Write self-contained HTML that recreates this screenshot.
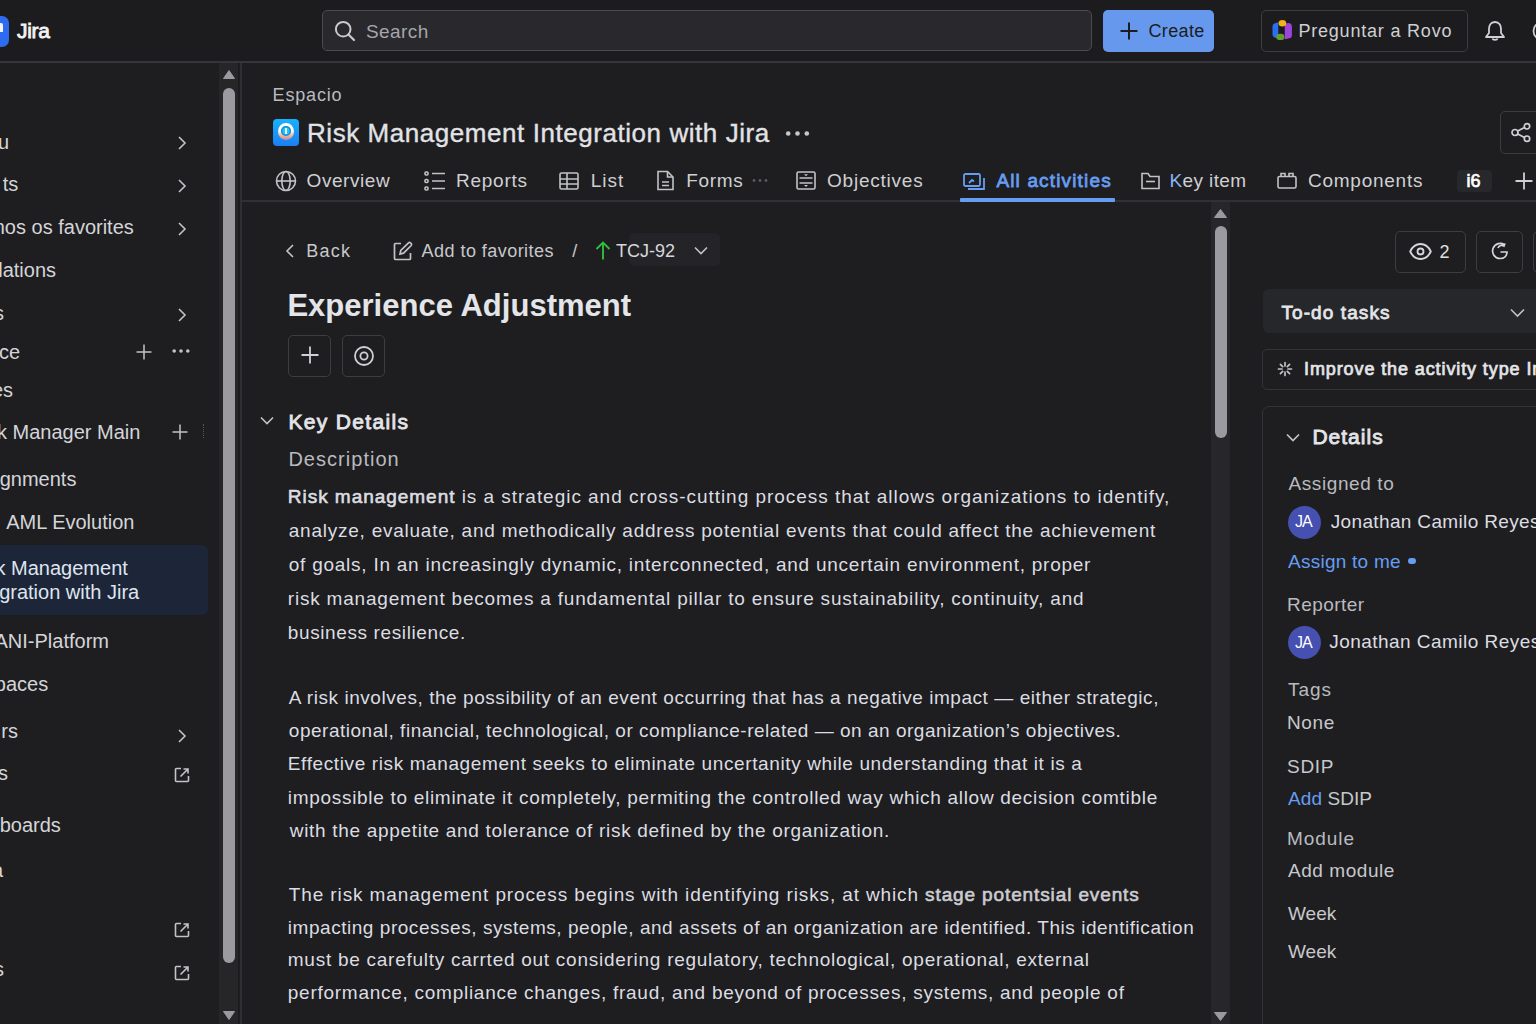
<!DOCTYPE html>
<html><head><meta charset="utf-8"><title>Jira</title>
<style>
html,body{margin:0;padding:0;}
body{width:1536px;height:1024px;overflow:hidden;position:relative;background:#1e1e21;font-family:"Liberation Sans",sans-serif;}
.t{position:absolute;white-space:nowrap;line-height:1;}
.b{position:absolute;box-sizing:border-box;}
b{font-weight:400;-webkit-text-stroke:0.6px currentColor;}
svg{position:absolute;overflow:visible;}
</style></head><body>
<!-- header bg -->
<div class="b" style="left:0;top:0;width:1536px;height:61px;background:#1c1c1f"></div>
<!-- header line -->
<div class="b" style="left:0;top:61px;width:1536px;height:2px;background:#36363a"></div>
<!-- jira logo -->
<div class="b" style="left:-14px;top:16px;width:23px;height:31px;background:#2f6bf0;border-radius:7px"></div>
<div class="b" style="left:-2px;top:23px;width:5px;height:9px;background:#f4f4f4;border-radius:0 2px 0 0"></div>
<!-- search -->
<div class="b" style="left:322px;top:10px;width:770px;height:41px;background:#28282d;border:1.5px solid #4a4a4f;border-radius:5px"></div>
<svg style="left:334px;top:20px" width="22" height="22" viewBox="0 0 22 22"><circle cx="9.2" cy="9.2" r="7.3" fill="none" stroke="#c9cacd" stroke-width="2"/><path d="M14.5 14.5 L20 20" stroke="#c9cacd" stroke-width="2.2" stroke-linecap="round"/></svg>
<!-- create -->
<div class="b" style="left:1103px;top:10px;width:111px;height:42px;background:#6699ee;border-radius:5px"></div>
<svg style="left:1120px;top:22px" width="18" height="18" viewBox="0 0 18 18"><path d="M9 0.5V17.5M0.5 9H17.5" stroke="#1b1d22" stroke-width="2"/></svg>
<!-- rovo -->
<div class="b" style="left:1261px;top:10px;width:207px;height:42px;border:1.5px solid #3c3d41;border-radius:5px"></div>
<svg style="left:1266px;top:14px" width="32" height="32" viewBox="0 0 32 32">
<path d="M12.3 8.3 L8.4 9.6 Q6.5 10.3 6.5 12.4 V20.8 Q6.5 22.7 8.4 23.4 L12.3 24.6 Z" fill="#2c6fec"/>
<path d="M18.8 9.5 L23.4 8.9 Q25.9 9.6 25.9 12.3 V21.4 Q25.9 23.8 23.6 24.3 L18.8 25.2 Z" fill="#9d44dd"/>
<ellipse cx="16.4" cy="9.3" rx="3.8" ry="3.3" fill="#f1b21a"/>
<ellipse cx="14.4" cy="22.9" rx="4.1" ry="3.2" fill="#62a02a"/>
</svg>
<!-- bell -->
<svg style="left:1484px;top:20px" width="22" height="22" viewBox="0 0 22 22"><path d="M11 2 C6.5 2 5 5.5 5 9 V13 L2 17 H20 L17 13 V9 C17 5.5 15.5 2 11 2 Z" fill="none" stroke="#cfd0d3" stroke-width="1.8" stroke-linejoin="round"/><path d="M8.5 18.5 C8.8 20.3 13.2 20.3 13.5 18.5" fill="none" stroke="#cfd0d3" stroke-width="1.8"/></svg>
<svg style="left:1531px;top:20px" width="22" height="22" viewBox="0 0 22 22"><circle cx="11" cy="11" r="8.5" fill="none" stroke="#cfd0d3" stroke-width="1.8"/></svg>

<!-- sidebar scrollbar -->
<div class="b" style="left:219px;top:63px;width:19px;height:961px;background:#262629"></div>
<div class="b" style="left:238px;top:63px;width:1px;height:961px;background:#1b1b1d"></div>
<div class="b" style="left:240px;top:63px;width:1.5px;height:961px;background:#2e2f33"></div>
<svg style="left:223px;top:70px" width="12" height="9" viewBox="0 0 12 9"><path d="M6 0.5 L11.5 8.5 H0.5 Z" fill="#9a9aa0" stroke="#9a9aa0" stroke-linejoin="round"/></svg>
<div class="b" style="left:223px;top:88px;width:12px;height:875px;background:#9a9aa0;border-radius:6px"></div>
<svg style="left:223px;top:1011px" width="12" height="9" viewBox="0 0 12 9"><path d="M6 8.5 L11.5 0.5 H0.5 Z" fill="#9a9aa0" stroke="#9a9aa0" stroke-linejoin="round"/></svg>

<!-- sidebar selected -->
<div class="b" style="left:-8px;top:544.5px;width:216px;height:70px;background:#1d2639;border-radius:6px"></div>

<!-- sidebar chevrons -->
<svg style="left:177px;top:136px" width="10" height="14" viewBox="0 0 10 14"><path d="M2 1 L8 7 L2 13" fill="none" stroke="#c2c3c6" stroke-width="1.6"/></svg>
<svg style="left:177px;top:178.5px" width="10" height="14" viewBox="0 0 10 14"><path d="M2 1 L8 7 L2 13" fill="none" stroke="#c2c3c6" stroke-width="1.6"/></svg>
<svg style="left:177px;top:221.5px" width="10" height="14" viewBox="0 0 10 14"><path d="M2 1 L8 7 L2 13" fill="none" stroke="#c2c3c6" stroke-width="1.6"/></svg>
<svg style="left:177px;top:308px" width="10" height="14" viewBox="0 0 10 14"><path d="M2 1 L8 7 L2 13" fill="none" stroke="#c2c3c6" stroke-width="1.6"/></svg>
<svg style="left:177px;top:729px" width="10" height="14" viewBox="0 0 10 14"><path d="M2 1 L8 7 L2 13" fill="none" stroke="#c2c3c6" stroke-width="1.6"/></svg>
<!-- plus / dots -->
<svg style="left:136px;top:344px" width="16" height="16" viewBox="0 0 16 16"><path d="M8 0.5V15.5M0.5 8H15.5" stroke="#c2c3c6" stroke-width="1.5"/></svg>
<svg style="left:172px;top:348px" width="18" height="6" viewBox="0 0 18 6"><circle cx="2.2" cy="3" r="1.8" fill="#c2c3c6"/><circle cx="9" cy="3" r="1.8" fill="#c2c3c6"/><circle cx="15.8" cy="3" r="1.8" fill="#c2c3c6"/></svg>
<svg style="left:172px;top:423.5px" width="16" height="16" viewBox="0 0 16 16"><path d="M8 0.5V15.5M0.5 8H15.5" stroke="#c2c3c6" stroke-width="1.5"/></svg>
<div class="b" style="left:203px;top:424px;width:1px;height:14px;border-left:1px dotted #55565a"></div>
<!-- ext link icons -->
<svg style="left:174px;top:767px" width="16" height="16" viewBox="0 0 16 16"><path d="M7 1.5 H2.5 Q1.5 1.5 1.5 2.5 V13.5 Q1.5 14.5 2.5 14.5 H13.5 Q14.5 14.5 14.5 13.5 V9" fill="none" stroke="#c2c3c6" stroke-width="1.6"/><path d="M6.5 9.5 L13.5 2.5 M9.5 2 H14 V6.5" fill="none" stroke="#c2c3c6" stroke-width="1.6"/></svg>
<svg style="left:174px;top:921.5px" width="16" height="16" viewBox="0 0 16 16"><path d="M7 1.5 H2.5 Q1.5 1.5 1.5 2.5 V13.5 Q1.5 14.5 2.5 14.5 H13.5 Q14.5 14.5 14.5 13.5 V9" fill="none" stroke="#c2c3c6" stroke-width="1.6"/><path d="M6.5 9.5 L13.5 2.5 M9.5 2 H14 V6.5" fill="none" stroke="#c2c3c6" stroke-width="1.6"/></svg>
<svg style="left:174px;top:964.5px" width="16" height="16" viewBox="0 0 16 16"><path d="M7 1.5 H2.5 Q1.5 1.5 1.5 2.5 V13.5 Q1.5 14.5 2.5 14.5 H13.5 Q14.5 14.5 14.5 13.5 V9" fill="none" stroke="#c2c3c6" stroke-width="1.6"/><path d="M6.5 9.5 L13.5 2.5 M9.5 2 H14 V6.5" fill="none" stroke="#c2c3c6" stroke-width="1.6"/></svg>

<!-- space icon -->
<div class="b" style="left:273px;top:119.3px;width:26px;height:26.5px;border-radius:4px;background:linear-gradient(180deg,#19b0ff,#1a80f2)"></div>
<div class="b" style="left:278px;top:123px;width:15.7px;height:16.8px;border-radius:50%;background:linear-gradient(180deg,#ffffff 45%,#f0a888 80%,#b48ad0)"></div>
<div class="b" style="left:281px;top:126px;width:10px;height:10px;border-radius:50%;background:#22c4f0;box-shadow:inset 0 0 0 1.5px #1590e0"></div>
<div class="b" style="left:285.3px;top:128px;width:1.6px;height:6px;background:#e8fbff"></div>
<!-- title dots -->
<svg style="left:785px;top:129.5px" width="25" height="7" viewBox="0 0 25 7"><circle cx="3.2" cy="3.5" r="2.3" fill="#c7c8cb"/><circle cx="12.5" cy="3.5" r="2.3" fill="#c7c8cb"/><circle cx="21.8" cy="3.5" r="2.3" fill="#c7c8cb"/></svg>
<!-- share btn -->
<div class="b" style="left:1500px;top:111px;width:60px;height:43px;border:1.5px solid #3c3d41;border-radius:5px"></div>
<svg style="left:1511px;top:123px" width="20" height="19" viewBox="0 0 20 19"><circle cx="4" cy="9.5" r="3" fill="none" stroke="#cfd0d3" stroke-width="1.7"/><circle cx="16" cy="3.3" r="2.7" fill="none" stroke="#cfd0d3" stroke-width="1.7"/><circle cx="16" cy="15.7" r="2.7" fill="none" stroke="#cfd0d3" stroke-width="1.7"/><path d="M6.7 8 L13.5 4.5 M6.7 11 L13.5 14.5" stroke="#cfd0d3" stroke-width="1.7"/></svg>

<!-- tabs line -->
<div class="b" style="left:241px;top:200px;width:1295px;height:2px;background:#303135"></div>
<div class="b" style="left:960px;top:198px;width:155px;height:3.5px;background:#669df1;border-radius:1px"></div>
<!-- tab icons -->
<svg style="left:274.5px;top:169.5px" width="22" height="22" viewBox="0 0 22 22"><g fill="none" stroke="#c2c3c6" stroke-width="1.6"><circle cx="11" cy="11" r="9.5"/><ellipse cx="11" cy="11" rx="4.2" ry="9.5"/><path d="M1.5 11H20.5"/></g></svg>
<svg style="left:424px;top:171px" width="22" height="20" viewBox="0 0 22 20"><g fill="none" stroke="#c2c3c6" stroke-width="1.6"><path d="M8 2.5H21M8 10H21M8 17.5H21"/><rect x="1" y="1" width="3" height="3" rx="1"/><rect x="1" y="8.5" width="3" height="3" rx="1"/><rect x="1" y="16" width="3" height="3" rx="1"/></g></svg>
<svg style="left:559px;top:171.5px" width="20" height="18" viewBox="0 0 20 18"><g fill="none" stroke="#c2c3c6" stroke-width="1.6"><rect x="1" y="1" width="18" height="16" rx="1.5"/><path d="M1 7H19M1 12H19M8 1V17"/></g></svg>
<svg style="left:657px;top:170px" width="17" height="21" viewBox="0 0 17 21"><g fill="none" stroke="#c2c3c6" stroke-width="1.6"><path d="M1 1.5H10.5L16 7V19.5H1Z"/><path d="M10.5 1.5V7H16"/><path d="M5 12H12M5 15.5H12"/></g></svg>
<svg style="left:752px;top:178px" width="16" height="5" viewBox="0 0 16 5"><circle cx="2" cy="2.5" r="1.4" fill="#5a5b5f"/><circle cx="8" cy="2.5" r="1.4" fill="#5a5b5f"/><circle cx="14" cy="2.5" r="1.4" fill="#5a5b5f"/></svg>
<svg style="left:796px;top:171px" width="20" height="19" viewBox="0 0 20 19"><g fill="none" stroke="#c2c3c6" stroke-width="1.6"><rect x="1" y="1" width="18" height="17" rx="1.5"/><path d="M3.5 7H16.5M3.5 12H16.5"/></g><path d="M8 3.2H12L10 5.3Z M8 14H12L10 16Z" fill="#c2c3c6"/></svg>
<svg style="left:963px;top:172.5px" width="22" height="17" viewBox="0 0 22 17"><g fill="none" stroke="#669df1" stroke-width="1.8"><rect x="1" y="1" width="16" height="12" rx="1.5"/><path d="M5 16H21V5"/><path d="M6 10 L9 7 L11 8.5"/></g></svg>
<svg style="left:1141px;top:171.5px" width="19" height="18" viewBox="0 0 19 18"><g fill="none" stroke="#c2c3c6" stroke-width="1.6"><path d="M1 4.5 V16.5 H18 V4.5 H9 L7 1.5 H1 Z"/><path d="M5 9.5H14"/></g></svg>
<svg style="left:1277px;top:172px" width="20" height="17" viewBox="0 0 20 17"><g fill="none" stroke="#c2c3c6" stroke-width="1.6"><rect x="1" y="4.5" width="18" height="11.5" rx="1.5"/><path d="M4 4.5V1.5H8V4.5M12 4.5V1.5H16V4.5"/></g></svg>
<div class="b" style="left:1457px;top:170px;width:35px;height:22px;background:#27282c;border-radius:4px"></div>
<svg style="left:1515px;top:171.5px" width="18" height="18" viewBox="0 0 18 18"><path d="M9 0.5V17.5M0.5 9H17.5" stroke="#cfd0d3" stroke-width="1.8"/></svg>

<!-- content scrollbar -->
<div class="b" style="left:1211px;top:202px;width:19px;height:822px;background:#27272b"></div>
<svg style="left:1214px;top:208.5px" width="13" height="9" viewBox="0 0 13 9"><path d="M6.5 0.5 L12.5 8.5 H0.5 Z" fill="#9a9aa0" stroke="#9a9aa0" stroke-linejoin="round"/></svg>
<div class="b" style="left:1214.5px;top:226px;width:12.5px;height:211.5px;background:#9a9aa0;border-radius:6px"></div>
<svg style="left:1214px;top:1012px" width="13" height="9" viewBox="0 0 13 9"><path d="M6.5 8.5 L12.5 0.5 H0.5 Z" fill="#9a9aa0" stroke="#9a9aa0" stroke-linejoin="round"/></svg>

<!-- breadcrumb -->
<svg style="left:285px;top:244px" width="10" height="14" viewBox="0 0 10 14"><path d="M8 1 L2 7 L8 13" fill="none" stroke="#c2c3c6" stroke-width="1.6"/></svg>
<svg style="left:392.5px;top:241px" width="20" height="20" viewBox="0 0 20 20"><g fill="none" stroke="#c2c3c6" stroke-width="1.7"><path d="M8 2.5H2.5Q1.5 2.5 1.5 3.5V17.5Q1.5 18.5 2.5 18.5H16.5Q17.5 18.5 17.5 17.5V12"/><path d="M7 13 L7.8 9.5 L15.5 1.8 Q16.5 1 17.5 1.8 L18.2 2.5 Q19 3.5 18.2 4.5 L10.5 12.2 Z"/></g></svg>
<div class="b" style="left:628.5px;top:233px;width:91.5px;height:33px;background:#242428;border-radius:5px"></div>
<svg style="left:595px;top:241px" width="16" height="19" viewBox="0 0 16 19"><path d="M8 18.5V1.5M1.5 8L8 1.5L14.5 8" fill="none" stroke="#2fbf3f" stroke-width="1.9"/></svg>
<svg style="left:694px;top:246px" width="14" height="9" viewBox="0 0 14 9"><path d="M1 1.5 L7 7.5 L13 1.5" fill="none" stroke="#c2c3c6" stroke-width="1.6"/></svg>

<!-- action buttons -->
<div class="b" style="left:288px;top:334.5px;width:43px;height:42px;border:1.5px solid #3c3d41;border-radius:5px"></div>
<svg style="left:301px;top:346px" width="18" height="18" viewBox="0 0 18 18"><path d="M9 0.5V17.5M0.5 9H17.5" stroke="#cfd0d3" stroke-width="1.8"/></svg>
<div class="b" style="left:341.5px;top:334.5px;width:43.5px;height:42px;border:1.5px solid #3c3d41;border-radius:5px"></div>
<svg style="left:353.5px;top:345.5px" width="20" height="20" viewBox="0 0 20 20"><circle cx="10" cy="10" r="9" fill="none" stroke="#cfd0d3" stroke-width="1.8"/><circle cx="10" cy="10" r="3.6" fill="none" stroke="#cfd0d3" stroke-width="1.8"/></svg>
<!-- key details chevron -->
<svg style="left:259.5px;top:416px" width="14" height="9" viewBox="0 0 14 9"><path d="M1 1.5 L7 7.5 L13 1.5" fill="none" stroke="#c2c3c6" stroke-width="1.6"/></svg>

<!-- right panel -->
<div class="b" style="left:1395px;top:230.5px;width:71px;height:42px;border:1.5px solid #3c3d41;border-radius:5px"></div>
<svg style="left:1409px;top:242.5px" width="23" height="17" viewBox="0 0 23 17"><path d="M1.2 8.5 C4 2.5 8 1 11.5 1 C15 1 19 2.5 21.8 8.5 C19 14.5 15 16 11.5 16 C8 16 4 14.5 1.2 8.5 Z" fill="none" stroke="#d6d7da" stroke-width="1.8"/><circle cx="11.5" cy="8.5" r="3" fill="none" stroke="#d6d7da" stroke-width="1.8"/></svg>
<div class="b" style="left:1475.5px;top:230.5px;width:47.5px;height:42px;border:1.5px solid #3c3d41;border-radius:5px"></div>
<svg style="left:1490.5px;top:242px" width="18" height="18" viewBox="0 0 18 18"><path d="M13 2.5 C10.5 0.5 4 1 2 6.5 C0.5 11 3.5 16.5 9 16.5 C13.5 16.5 16 13.5 16 10 H9.5 M7 6 C8 3.5 11 2.5 13 4 L14 1.5" fill="none" stroke="#d6d7da" stroke-width="1.7"/></svg>
<div class="b" style="left:1533px;top:230.5px;width:40px;height:42px;border:1.5px solid #3c3d41;border-radius:5px"></div>

<div class="b" style="left:1263px;top:288.5px;width:290px;height:44.5px;background:#26272b;border-radius:6px"></div>
<svg style="left:1510px;top:307.5px" width="15" height="10" viewBox="0 0 15 10"><path d="M1 1.5 L7.5 8 L14 1.5" fill="none" stroke="#c2c3c6" stroke-width="1.6"/></svg>

<div class="b" style="left:1262px;top:348.5px;width:300px;height:41px;border:1.5px solid #333438;border-radius:5px"></div>
<svg style="left:1277px;top:361px" width="16" height="16" viewBox="0 0 16 16"><g stroke="#c2c3c6" stroke-width="1.7" stroke-linecap="round"><path d="M8 1.5V5M8 11V14.5M1.5 8H5M11 8H14.5M3.4 3.4L5.7 5.7M10.3 10.3L12.6 12.6M12.6 3.4L10.3 5.7M5.7 10.3L3.4 12.6"/></g></svg>

<div class="b" style="left:1262px;top:406px;width:300px;height:700px;border:1.5px solid #333438;border-radius:7px"></div>
<svg style="left:1286px;top:433px" width="14" height="9" viewBox="0 0 14 9"><path d="M1 1.5 L7 7.5 L13 1.5" fill="none" stroke="#c2c3c6" stroke-width="1.7"/></svg>
<div class="b" style="left:1287.5px;top:506px;width:33px;height:33px;border-radius:50%;background:#4550b0"></div>
<div class="b" style="left:1287.5px;top:626px;width:33px;height:33px;border-radius:50%;background:#4550b0"></div>
<div class="b" style="left:1408px;top:558px;width:7.5px;height:6px;border-radius:3px;background:#669df1"></div>

<div class="t" id="jira" style="left:17.00px;top:20.22px;font-size:21px;color:#f2f2f2;-webkit-text-stroke:0.84px currentColor;letter-spacing:-0.334px;">Jira</div>
<div class="t" id="search" style="left:366.00px;top:21.62px;font-size:19px;color:#a4a6aa;letter-spacing:0.400px;">Search</div>
<div class="t" id="create" style="left:1148.40px;top:21.96px;font-size:18px;color:#1b1d22;letter-spacing:0.380px;">Create</div>
<div class="t" id="rovo" style="left:1298.40px;top:21.96px;font-size:18px;color:#cfd0d3;letter-spacing:0.800px;">Preguntar a Rovo</div>
<div class="t" id="s1" style="right:1527.00px;top:131.77px;font-size:20px;color:#d4d5d8;">u</div>
<div class="t" id="s2" style="right:1517.80px;top:174.07px;font-size:20px;color:#d4d5d8;">ts</div>
<div class="t" id="s3" style="right:1402.20px;top:216.67px;font-size:20px;color:#d4d5d8;">nos os favorites</div>
<div class="t" id="s4" style="right:1480.00px;top:259.67px;font-size:20px;color:#d4d5d8;">lations</div>
<div class="t" id="s5" style="right:1532.00px;top:303.37px;font-size:20px;color:#d4d5d8;">s</div>
<div class="t" id="s6" style="right:1516.00px;top:341.97px;font-size:20px;color:#d4d5d8;">ce</div>
<div class="t" id="s7" style="right:1523.00px;top:380.27px;font-size:20px;color:#d4d5d8;">es</div>
<div class="t" id="s8" style="right:1395.60px;top:421.67px;font-size:20px;color:#d4d5d8;">k Manager Main</div>
<div class="t" id="s9" style="right:1459.60px;top:469.47px;font-size:20px;color:#d4d5d8;">gnments</div>
<div class="t" id="s10" style="right:1401.60px;top:512.17px;font-size:20px;color:#d4d5d8;">AML Evolution</div>
<div class="t" id="s13" style="right:1427.00px;top:630.57px;font-size:20px;color:#d4d5d8;">ANI-Platform</div>
<div class="t" id="s14" style="right:1487.80px;top:673.57px;font-size:20px;color:#d4d5d8;">paces</div>
<div class="t" id="s15" style="right:1518.00px;top:721.07px;font-size:20px;color:#d4d5d8;">rs</div>
<div class="t" id="s16" style="right:1528.00px;top:762.57px;font-size:20px;color:#d4d5d8;">s</div>
<div class="t" id="s17" style="right:1475.20px;top:815.37px;font-size:20px;color:#d4d5d8;">boards</div>
<div class="t" id="s18" style="right:1533.00px;top:860.07px;font-size:20px;color:#d4d5d8;">a</div>
<div class="t" id="s19" style="right:1532.00px;top:959.37px;font-size:20px;color:#d4d5d8;">s</div>
<div class="t" id="s11" style="right:1408.20px;top:558.07px;font-size:20px;color:#dfe5f0;">k Management</div>
<div class="t" id="s12" style="right:1396.80px;top:582.37px;font-size:20px;color:#dfe5f0;">gration with Jira</div>
<div class="t" id="espacio" style="left:272.60px;top:85.76px;font-size:18px;color:#b9bbbf;letter-spacing:0.817px;">Espacio</div>
<div class="t" id="title" style="left:307.00px;top:120.19px;font-size:26px;color:#e2e3e6;letter-spacing:0.556px;-webkit-text-stroke:0.35px currentColor;">Risk Management Integration with Jira</div>
<div class="t" id="tab1" style="left:306.60px;top:170.52px;font-size:19px;color:#cfd0d3;letter-spacing:0.557px;">Overview</div>
<div class="t" id="tab2" style="left:456.00px;top:170.52px;font-size:19px;color:#cfd0d3;letter-spacing:0.750px;">Reports</div>
<div class="t" id="tab3" style="left:590.80px;top:170.52px;font-size:19px;color:#cfd0d3;letter-spacing:0.932px;">List</div>
<div class="t" id="tab4" style="left:686.20px;top:170.52px;font-size:19px;color:#cfd0d3;letter-spacing:0.700px;">Forms</div>
<div class="t" id="tab5" style="left:827.00px;top:170.52px;font-size:19px;color:#cfd0d3;letter-spacing:0.778px;">Objectives</div>
<div class="t" id="tab7" style="left:1169.40px;top:170.52px;font-size:19px;color:#cfd0d3;letter-spacing:0.399px;"><span style="color:#8db6f2">K</span>ey item</div>
<div class="t" id="tab8" style="left:1308.00px;top:170.52px;font-size:19px;color:#cfd0d3;letter-spacing:0.744px;">Components</div>
<div class="t" id="tab6" style="left:996.40px;top:170.72px;font-size:19px;color:#669df1;-webkit-text-stroke:0.76px currentColor;letter-spacing:1.154px;">All activities</div>
<div class="t" id="badge" style="left:1466.60px;top:171.76px;font-size:18px;color:#ffffff;-webkit-text-stroke:0.72px currentColor;">i6</div>
<div class="t" id="back" style="left:306.20px;top:241.96px;font-size:18px;color:#c7c8cb;letter-spacing:1.300px;">Back</div>
<div class="t" id="fav" style="left:421.60px;top:241.96px;font-size:18px;color:#c7c8cb;letter-spacing:0.455px;">Add to favorites</div>
<div class="t" id="slash" style="left:572.20px;top:241.96px;font-size:18px;color:#c7c8cb;">/</div>
<div class="t" id="tcj" style="left:616.00px;top:241.66px;font-size:18px;color:#d6d7da;">TCJ-92</div>
<div class="t" id="h1" style="left:287.40px;top:289.66px;font-size:31px;color:#e4e5e8;font-weight:700;letter-spacing:0.015px;">Experience Adjustment</div>
<div class="t" id="kd" style="left:288.40px;top:410.92px;font-size:21px;color:#e4e5e8;-webkit-text-stroke:0.84px currentColor;letter-spacing:1.330px;">Key Details</div>
<div class="t" id="desc" style="left:288.40px;top:449.27px;font-size:20px;color:#b9bbbf;letter-spacing:1.030px;">Description</div>
<div class="t" id="p1_0" style="left:287.80px;top:487.12px;font-size:19px;color:#dcdde0;letter-spacing:0.966px;"><b>Risk management</b> is a strategic and cross-cutting process that allows organizations to identify,</div>
<div class="t" id="p1_1" style="left:288.80px;top:521.22px;font-size:19px;color:#dcdde0;letter-spacing:0.757px;">analyze, evaluate, and methodically address potential events that could affect the achievement</div>
<div class="t" id="p1_2" style="left:288.80px;top:555.22px;font-size:19px;color:#dcdde0;letter-spacing:0.749px;">of goals, In an increasingly dynamic, interconnected, and uncertain environment, proper</div>
<div class="t" id="p1_3" style="left:287.80px;top:589.22px;font-size:19px;color:#dcdde0;letter-spacing:0.797px;">risk management becomes a fundamental pillar to ensure sustainability, continuity, and</div>
<div class="t" id="p1_4" style="left:287.80px;top:623.22px;font-size:19px;color:#dcdde0;letter-spacing:0.616px;">business resilience.</div>
<div class="t" id="p2_0" style="left:288.80px;top:688.02px;font-size:19px;color:#dcdde0;letter-spacing:0.554px;">A risk involves, the possibility of an event occurring that has a negative impact &mdash; either strategic,</div>
<div class="t" id="p2_1" style="left:288.80px;top:721.22px;font-size:19px;color:#dcdde0;letter-spacing:0.518px;">operational, financial, technological, or compliance-related &mdash; on an organization&rsquo;s objectives.</div>
<div class="t" id="p2_2" style="left:287.80px;top:754.42px;font-size:19px;color:#dcdde0;letter-spacing:0.614px;">Effective risk management seeks to eliminate uncertanity while understanding that it is a</div>
<div class="t" id="p2_3" style="left:287.80px;top:787.52px;font-size:19px;color:#dcdde0;letter-spacing:0.700px;">impossible to eliminate it completely, permiting the controlled way which allow decision comtible</div>
<div class="t" id="p2_4" style="left:289.80px;top:820.72px;font-size:19px;color:#dcdde0;letter-spacing:0.687px;">with the appetite and tolerance of risk defined by the organization.</div>
<div class="t" id="p3_0" style="left:288.80px;top:884.72px;font-size:19px;color:#dcdde0;letter-spacing:0.878px;">The risk management process begins with identifying risks, at which <b style="color:#cbccd0">stage potentsial events</b></div>
<div class="t" id="p3_1" style="left:287.80px;top:917.82px;font-size:19px;color:#dcdde0;letter-spacing:0.540px;">impacting processes, systems, people, and assets of an organization are identified. This identification</div>
<div class="t" id="p3_2" style="left:287.80px;top:950.12px;font-size:19px;color:#dcdde0;letter-spacing:0.734px;">must be carefulty carrted out considering regulatory, technological, operational, external</div>
<div class="t" id="p3_3" style="left:287.80px;top:983.22px;font-size:19px;color:#dcdde0;letter-spacing:0.733px;">performance, compliance changes, fraud, and beyond of processes, systems, and people of</div>
<div class="t" id="eye2" style="left:1439.60px;top:242.76px;font-size:18px;color:#e0e0e0;">2</div>
<div class="t" id="todo" style="left:1281.40px;top:302.62px;font-size:19px;color:#e4e5e8;-webkit-text-stroke:0.76px currentColor;letter-spacing:1.100px;">To-do tasks</div>
<div class="t" id="improve" style="left:1304.00px;top:360.06px;font-size:18px;color:#e4e5e8;-webkit-text-stroke:0.72px currentColor;letter-spacing:0.896px;">Improve the activity type Improvement</div>
<div class="t" id="details" style="left:1312.40px;top:426.02px;font-size:21px;color:#e4e5e8;-webkit-text-stroke:0.84px currentColor;letter-spacing:1.016px;">Details</div>
<div class="t" id="assigned" style="left:1288.40px;top:473.52px;font-size:19px;color:#b9bbbf;letter-spacing:0.610px;">Assigned to</div>
<div class="t" id="name1" style="left:1330.70px;top:511.92px;font-size:19px;color:#dcdde0;letter-spacing:0.357px;">Jonathan Camilo Reyes</div>
<div class="t" id="assignme" style="left:1288.00px;top:551.52px;font-size:19px;color:#669df1;letter-spacing:0.252px;">Assign to me</div>
<div class="t" id="reporter" style="left:1287.00px;top:594.72px;font-size:19px;color:#b9bbbf;letter-spacing:0.444px;">Reporter</div>
<div class="t" id="name2" style="left:1329.30px;top:632.12px;font-size:19px;color:#dcdde0;letter-spacing:0.457px;">Jonathan Camilo Reyes</div>
<div class="t" id="tags" style="left:1288.00px;top:680.02px;font-size:19px;color:#b9bbbf;letter-spacing:0.966px;">Tags</div>
<div class="t" id="none" style="left:1287.00px;top:712.92px;font-size:19px;color:#c7c8cb;letter-spacing:0.599px;">None</div>
<div class="t" id="sdip" style="left:1287.00px;top:757.42px;font-size:19px;color:#c7c8cb;letter-spacing:0.734px;">SDIP</div>
<div class="t" id="addsdip" style="left:1288.00px;top:788.52px;font-size:19px;color:#c7c8cb;letter-spacing:0.083px;"><span style="color:#669df1">Add</span> SDIP</div>
<div class="t" id="module" style="left:1287.00px;top:828.62px;font-size:19px;color:#b9bbbf;letter-spacing:0.960px;">Module</div>
<div class="t" id="addmod" style="left:1288.00px;top:861.32px;font-size:19px;color:#c7c8cb;letter-spacing:0.556px;">Add module</div>
<div class="t" id="week1" style="left:1288.00px;top:904.42px;font-size:19px;color:#c7c8cb;">Week</div>
<div class="t" id="week2" style="left:1288.00px;top:941.52px;font-size:19px;color:#c7c8cb;">Week</div>
<div class="t" id="ja1" style="left:1295.00px;top:514.46px;font-size:16px;color:#ffffff;letter-spacing:-1.000px;">JA</div>
<div class="t" id="ja2" style="left:1295.00px;top:634.66px;font-size:16px;color:#ffffff;letter-spacing:-1.000px;">JA</div>
</body></html>
